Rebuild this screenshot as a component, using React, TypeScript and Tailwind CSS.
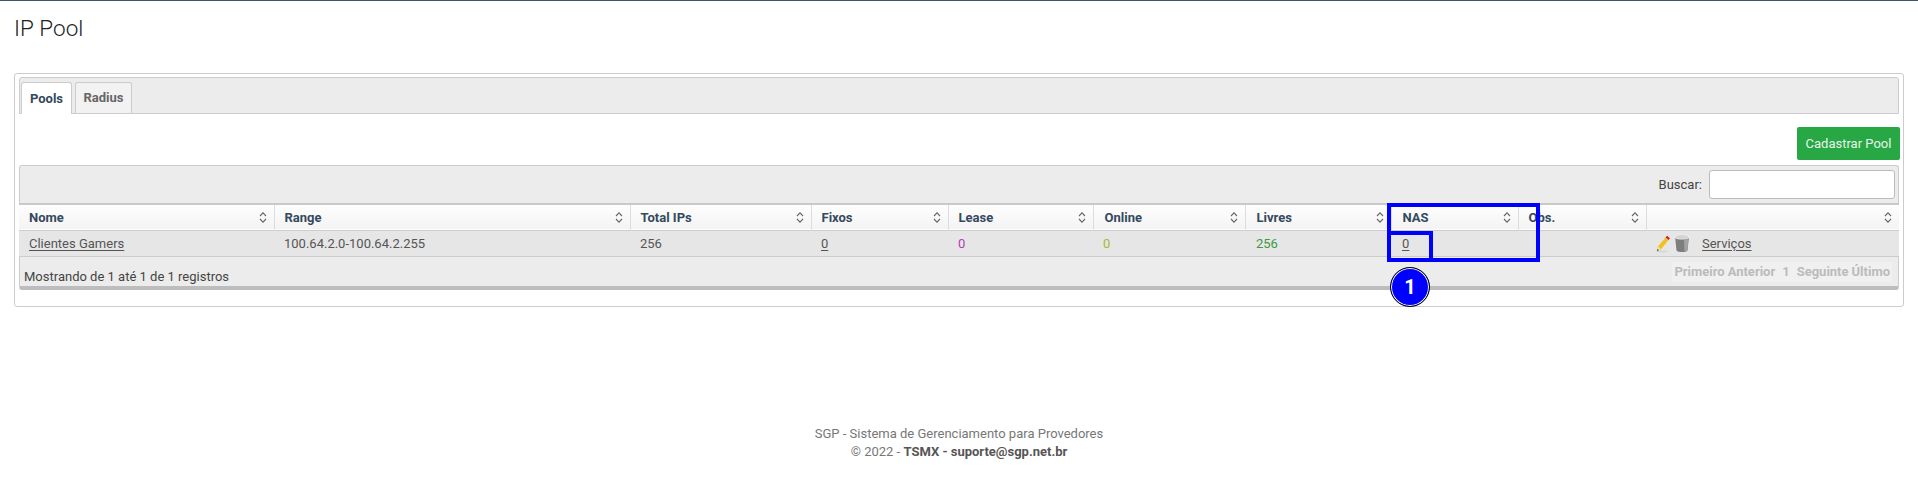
import React from 'react';

const columns = [
  { label: 'Nome', width: 'w-[255px]', pad: 'pl-[10px]' },
  { label: 'Range', width: 'w-[356px]', pad: 'pl-[10px]' },
  { label: 'Total IPs', width: 'w-[181px]', pad: 'pl-[10px]' },
  { label: 'Fixos', width: 'w-[137px]', pad: 'pl-[10px]' },
  { label: 'Lease', width: 'w-[145px]', pad: 'pl-[10px]' },
  { label: 'Online', width: 'w-[152px]', pad: 'pl-[11px]' },
  { label: 'Livres', width: 'w-[146px]', pad: 'pl-[11px]' },
  { label: 'NAS', width: 'w-[127px]', pad: 'pl-[11px]' },
  { label: 'Obs.', width: 'w-[128px]', pad: 'pl-[10px]' },
  { label: '', width: 'w-[253px]', pad: 'pl-[10px]' },
];

const SortIcon = () => (
  <svg width="8" height="13" viewBox="0 0 8 13" fill="none" stroke="#666" strokeWidth="1.1">
    <polyline points="1,5 4,1.8 7,5" />
    <polyline points="1,8 4,11.2 7,8" />
  </svg>
);

const PencilIcon = () => (
  <svg width="15" height="18" viewBox="0 0 15 18">
    <ellipse cx="6" cy="16.5" rx="6" ry="1" fill="#d8d8d8" />
    <path d="M1 16 L2 11.5 L9.5 2.5 L12.5 5 L5 14.2 Z" fill="#f2c21a" />
    <path d="M1 16 L2 11.5 L5 14.2 Z" fill="#f0dfb0" />
    <path d="M1 16 L1.5 14 L3 15.2 Z" fill="#333" />
    <path d="M9.5 2.5 L11 0.8 L14 3.2 L12.5 5 Z" fill="#d3213a" />
  </svg>
);

const TrashIcon = () => (
  <svg width="16" height="19" viewBox="0 0 16 19">
    <ellipse cx="8" cy="3" rx="7" ry="2.4" fill="#d4d4d4" stroke="#f2f2f2" strokeWidth="0.8" />
    <path d="M1.2 4 C3 6 13 6 14.8 4 L13.5 16.5 C12 18.6 4 18.6 2.5 16.5 Z" fill="#7d7d7d" />
    <path d="M10 5.6 L14.6 4.6 L13.3 16.5 L10.5 17.6 Z" fill="#a3a3a3" />
  </svg>
);

export default function App() {
  return (
    <div className="relative min-h-[487px] bg-white font-['Roboto',sans-serif] text-[13px] text-[#555]">
      <div className="h-px bg-[#44556a]" />

      <h1 className="pl-[14px] pt-[16px] text-[22.5px] font-light leading-[22px] text-[#222]">IP Pool</h1>

      {/* Card */}
      <div className="mx-[14px] mt-[34px] h-[234px] rounded-[3px] border border-[#ccc] px-[4px] pt-[3px]">
        <div className="flex h-[37px] items-end rounded-t-[3px] border border-[#ccc] bg-[#ececec] pl-[1px]">
          <div className="-mb-px flex h-[32px] w-[51px] items-center justify-center rounded-t-[3px] border border-b-0 border-[#ccc] bg-white text-[13px] font-bold text-[#34495e]">
            Pools
          </div>
          <div className="ml-[3px] flex h-[31px] w-[57px] items-center justify-center rounded-t-[3px] border border-b-0 border-[#ccc] bg-[#f2f2f2] text-[13px] font-bold text-[#666]">
            Radius
          </div>
        </div>

        <div className="flex justify-end pt-[13px] pb-[5px]">
          <button className="h-[33px] w-[103px] translate-x-px rounded-[2px] bg-[#28a745] text-[13px] text-[#e6f6ea]">Cadastrar Pool</button>
        </div>

        {/* Table wrapper */}
        <div className="relative rounded-[3px]">
          <div className="flex h-[38px] items-center justify-end rounded-t-[3px] border border-b-0 border-[#ccc] bg-[#ececec] pr-[3px]">
            <span className="mr-[7px] text-[13px] text-[#444]">Buscar:</span>
            <input className="h-[29px] w-[186px] rounded-[3px] border border-[#bbb] bg-white" />
          </div>

          <table className="w-full table-fixed border-collapse border-t-2 border-[#c8c8c8]">
            <thead>
              <tr className="h-[26px] border-b border-[#ccc] bg-gradient-to-b from-white to-[#f3f3f3]">
                {columns.map((col, i) => (
                  <th key={i} className={`${col.width} ${col.pad} border-r border-[#ddd] pr-[7px] text-left last:border-r-0`}>
                    <div className="flex items-center justify-between pt-[1px]">
                      <span className="text-[13px] font-bold text-[#34495e]">{col.label}</span>
                      <SortIcon />
                    </div>
                  </th>
                ))}
              </tr>
            </thead>
            <tbody>
              <tr className="h-[26px] border-b border-[#ccc] bg-[#e6e6e6] text-[13px]">
                <td className="pl-[10px] pt-[1px]"><a className="text-[#555] underline underline-offset-2">Clientes Gamers</a></td>
                <td className="pl-[10px] pt-[1px]">100.64.2.0-100.64.2.255</td>
                <td className="pl-[10px] pt-[1px]">256</td>
                <td className="pl-[10px] pt-[1px]"><a className="underline underline-offset-2">0</a></td>
                <td className="pl-[10px] pt-[1px] text-[#b73cb7]">0</td>
                <td className="pl-[10px] pt-[1px] text-[#a8b82e]">0</td>
                <td className="pl-[11px] pt-[1px] text-[#3f9a3f]">256</td>
                <td className="pl-[11px] pt-[1px]"><a className="underline underline-offset-2">0</a></td>
                <td />
                <td className="pl-[10px] pt-[1px]">
                  <div className="flex items-center">
                    <PencilIcon />
                    <div className="ml-[3px]"><TrashIcon /></div>
                    <a className="ml-[12px] underline underline-offset-2">Serviços</a>
                  </div>
                </td>
              </tr>
            </tbody>
          </table>

          <div className="flex h-[33px] items-start justify-between rounded-b-[3px] border-x border-b-4 border-x-[#ccc] border-b-[#bdbdbd] bg-[#ececec] pl-[4px] pr-[6px]">
            <span className="pt-[12px] text-[13px] leading-[16px] text-[#444]">Mostrando de 1 até 1 de 1 registros</span>
            <div className="mt-[5px] flex h-[20px] items-center gap-[3px] bg-[#f0f0f0] px-[2px] text-[13px] font-bold text-[#bbb]">
              <span>Primeiro</span>
              <span>Anterior</span>
              <span className="px-[4px]">1</span>
              <span>Seguinte</span>
              <span>Último</span>
            </div>
          </div>

          {/* Annotation over the table */}
          <div className="absolute left-[1368px] top-[38px] h-[59px] w-[153px] border-4 border-[#0000ff]" />
          <div className="absolute left-[1368px] top-[66px] h-[31px] w-[46px] border-4 border-[#0000ff]" />
          <div className="absolute left-[1371px] top-[102px] flex h-[40px] w-[40px] items-center justify-center rounded-full border border-black bg-[#0000ff] text-[20px] font-bold text-white shadow-[inset_0_0_0_1px_white]">
            1
          </div>
        </div>
      </div>

      <footer className="pt-[118px] text-center text-[13px] leading-[18px] text-[#777]">
        <div>SGP - Sistema de Gerenciamento para Provedores</div>
        <div>© 2022 - <b className="text-[#555]">TSMX - suporte@sgp.net.br</b></div>
      </footer>
    </div>
  );
}
